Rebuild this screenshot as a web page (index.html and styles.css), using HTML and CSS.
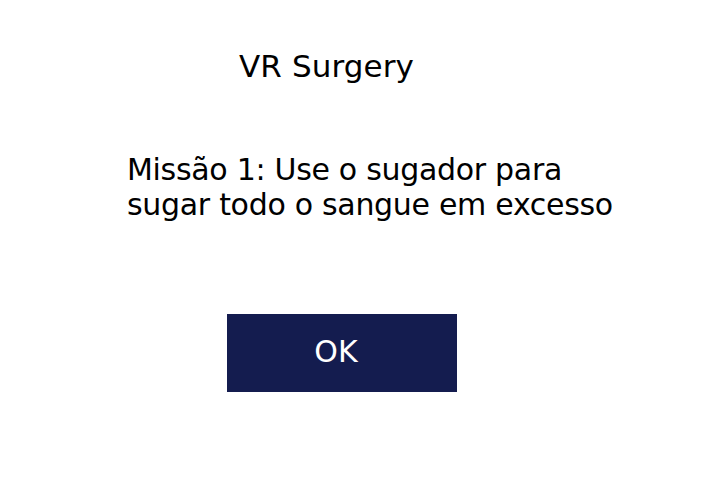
FILE: index.html
```html
<!DOCTYPE html>
<html lang="pt">
<head>
<meta charset="utf-8">
<title>VR Surgery</title>
<link rel="stylesheet" href="styles.css">
</head>
<body>
<main class="screen">
  <h1 class="title">VR Surgery</h1>
  <p class="mission">Missão 1: Use o sugador para<br>sugar todo o sangue em excesso</p>
  <div class="actions">
    <button class="ok" type="button">OK</button>
  </div>
</main>
</body>
</html>
```

FILE: styles.css
```css
html, body {
  margin: 0;
  padding: 0;
  background: #ffffff;
}

.screen {
  width: 720px;
  height: 480px;
  display: flex;
  flex-direction: column;
  font-family: "Comic Sans MS", "DejaVu Sans", sans-serif;
  color: #000000;
}

.title {
  margin: 48px 0 0 239px;
  font-size: 31px;
  font-weight: normal;
  line-height: 36px;
  letter-spacing: 0.1px;
}

.mission {
  margin: 68px 0 0 127px;
  font-size: 30px;
  line-height: 35px;
  letter-spacing: -0.3px;
}

.actions {
  margin: 0;
  padding: 92px 0 0 227px;
}

.ok {
  width: 230px;
  height: 78px;
  border: none;
  background: #141c4f;
  color: #ffffff;
  font-family: inherit;
  font-size: 30px;
  padding: 0 12px 4px 0;
  cursor: pointer;
}
```
